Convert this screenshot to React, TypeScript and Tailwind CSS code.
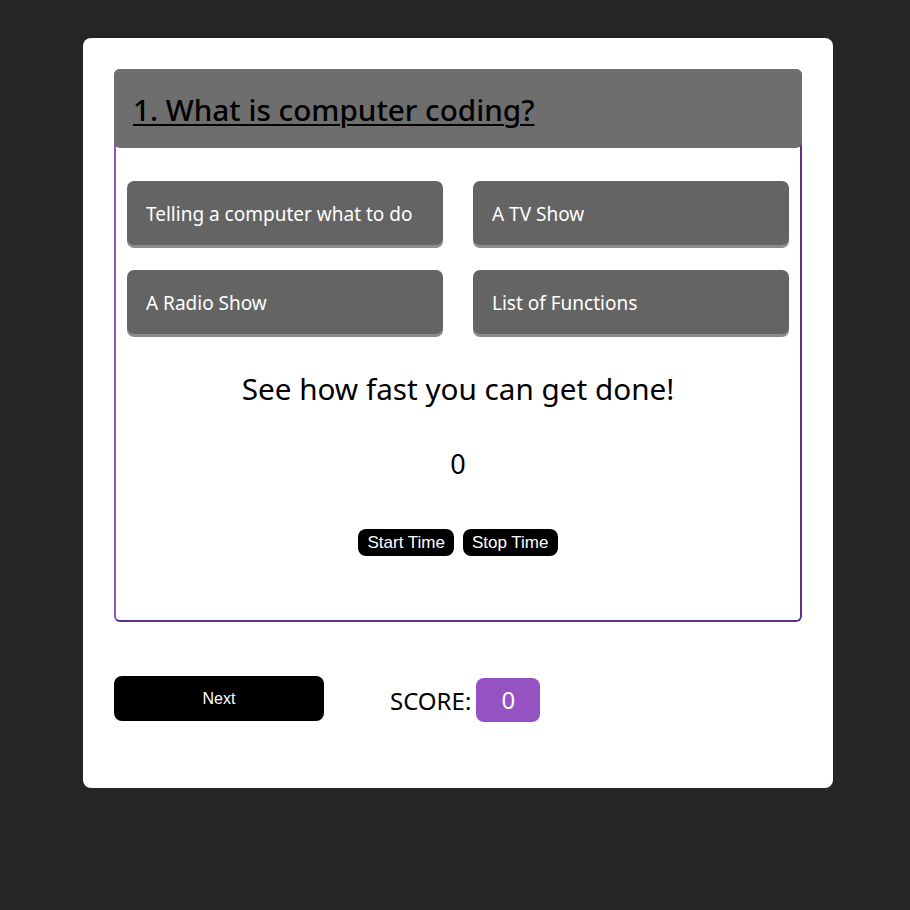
import { useState } from 'react'

const ANSWERS = ['Telling a computer what to do', 'A TV Show', 'A Radio Show', 'List of Functions']

export default function App() {
  const [score] = useState(0)
  const [time] = useState(0)

  return (
    <div className="min-h-screen bg-[#252525] pt-[38px] font-['Noto_Sans',sans-serif]">
      <div className="ml-[83px] w-[750px] rounded-[8px] bg-white p-[31px] pb-[66px]">
        {/* Quiz box */}
        <div className="h-[553px] rounded-[6px] border-2 border-t-[#9553c2] border-l-[#9553c2] border-r-[#5e2f86] border-b-[#5e2f86]">
          <div className="-mx-[2px] -mt-[2px] h-[79px] rounded-[6px] bg-[#6e6e6e] pl-[19px] pt-[21px]">
            <h1 className="text-[29.7px] font-medium leading-[40px] text-black underline decoration-2 underline-offset-[3px]">
              1. What is computer coding?
            </h1>
          </div>

          <div className="mt-[33px] grid grid-cols-2 gap-x-[30px] gap-y-[25px] px-[11px]">
            {ANSWERS.map((a) => (
              <button
                key={a}
                className="h-[64px] rounded-[7px] bg-[#646464] pl-[19px] pt-[3px] text-left text-[19px] text-white shadow-[0_3px_0_#8c8c8c]"
              >
                {a}
              </button>
            ))}
          </div>

          <p className="mt-[35px] text-center text-[29.7px] leading-[40px] text-black">See how fast you can get done!</p>
          <p className="mt-[35px] text-center text-[27px] leading-[40px] text-black">{time}</p>

          <div className="mt-[45px] flex justify-center gap-[9px] font-['Liberation_Sans',sans-serif]">
            <button className="h-[27px] rounded-[8px] bg-black px-[9px] text-[17px] text-white">Start Time</button>
            <button className="h-[27px] rounded-[8px] bg-black px-[9px] text-[17px] text-white">Stop Time</button>
          </div>
        </div>

        <div className="mt-[53px] flex items-center">
          <button className="h-[45px] w-[210px] rounded-[8px] bg-black font-['Liberation_Sans',sans-serif] text-[16px] text-white">
            Next
          </button>
          <span className="ml-[66px] mt-[4px] text-[24px] text-black">SCORE:</span>
          <span className="ml-[5px] mt-[3px] flex h-[44px] w-[64px] items-center justify-center rounded-[8px] bg-[#9553c2] text-[24px] text-white">
            {score}
          </span>
        </div>
      </div>
    </div>
  )
}
